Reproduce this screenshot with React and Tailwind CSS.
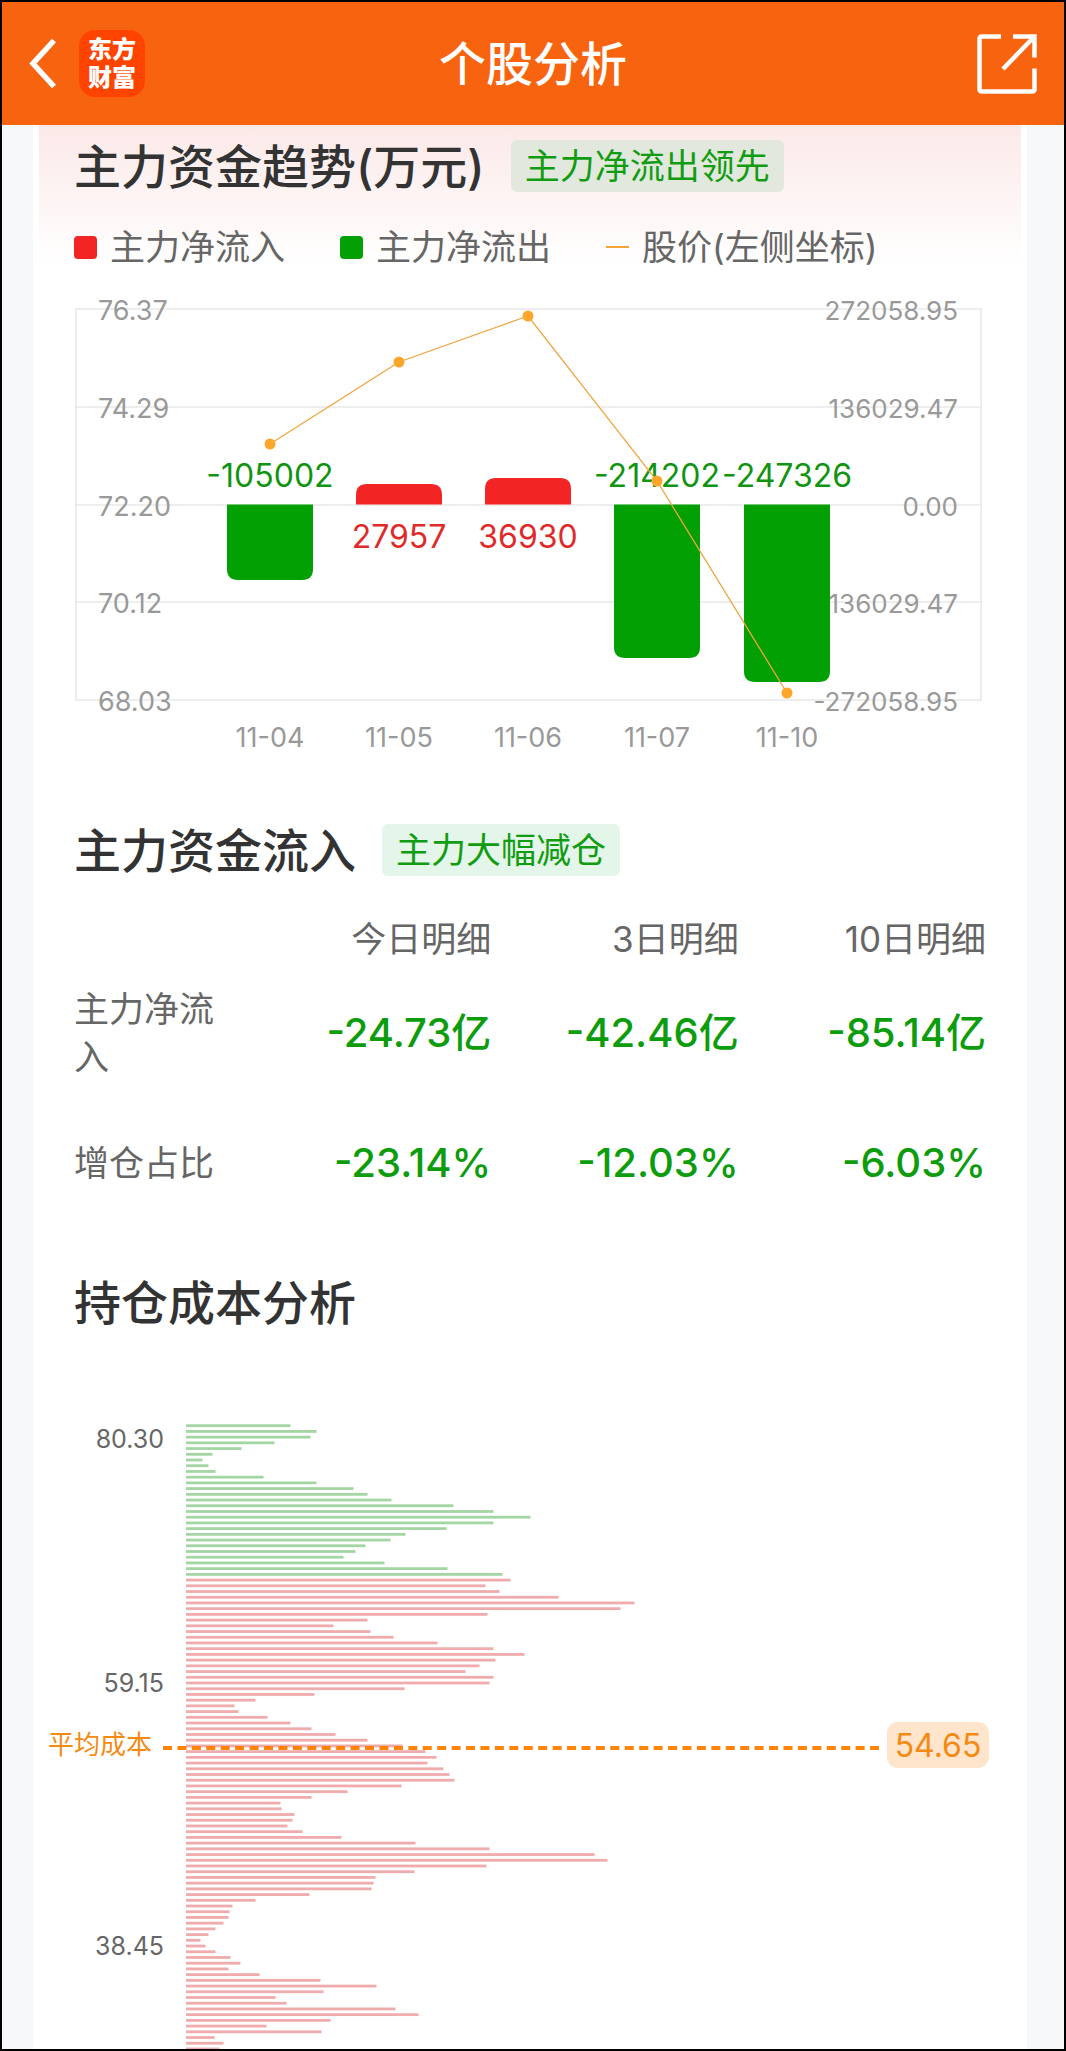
import React from 'react';

const LEGEND = [
  { label: '主力净流入', mark: 'h-[23px] rounded-sm bg-[#f32424]' },
  { label: '主力净流出', mark: 'h-[23px] rounded-sm bg-[#02a002]' },
  { label: '股价(左侧坐标)', mark: 'h-0.5 bg-[#f2a535]' },
];

const GRID = [
  { y: 309, left: '76.37', right: '272058.95' },
  { y: 407, left: '74.29', right: '136029.47' },
  { y: 505, left: '72.20', right: '0.00' },
  { y: 602, left: '70.12', right: '-136029.47' },
  { y: 700, left: '68.03', right: '-272058.95' },
];

const DAYS = [
  { date: '11-04', x: 270, flow: -105002, barEnd: 580, priceY: 444 },
  { date: '11-05', x: 399, flow: 27957, barEnd: 484, priceY: 362 },
  { date: '11-06', x: 528, flow: 36930, barEnd: 478, priceY: 316 },
  { date: '11-07', x: 657, flow: -214202, barEnd: 658, priceY: 481 },
  { date: '11-10', x: 787, flow: -247326, barEnd: 682, priceY: 693 },
];

const FLOW_ROWS = [
  { label: '主力净流入', values: ['-24.73亿', '-42.46亿', '-85.14亿'], height: 'h-[140px]' },
  { label: '增仓占比', values: ['-23.14%', '-12.03%', '-6.03%'], height: 'h-[119px]' },
];

// bar lengths from the highest price down; the first PROFIT_START are above the current price
const PROFIT_START = 27;
const COST_BARS = [
  104, 130, 124, 88, 55, 26, 16, 22, 29, 77, 130, 167, 181, 205, 267, 307, 344, 307, 260, 219,
  204, 179, 169, 157, 198, 261, 316, 324, 299, 313, 372, 448, 434, 301, 181, 147, 184, 207, 251,
  307, 338, 309, 293, 279, 307, 303, 218, 128, 69, 48, 52, 81, 104, 125, 149, 181, 216, 239, 250,
  241, 257, 263, 268, 215, 161, 125, 94, 95, 108, 106, 101, 116, 155, 229, 303, 408, 421, 300,
  228, 189, 187, 185, 123, 69, 46, 43, 42, 37, 29, 22, 14, 19, 29, 44, 54, 42, 73, 134, 190, 137,
  89, 100, 209, 232, 144, 80, 135, 28, 37, 33,
];

const COST_LABELS = [
  { y: 1448, text: '80.30' },
  { y: 1692, text: '59.15' },
  { y: 1955, text: '38.45' },
];

function Header() {
  return (
    <header className="flex h-[123px] items-center justify-between bg-[#f86310] px-[27px] text-white">
      <div className="flex flex-1 items-center gap-[22px]">
        <button type="button" aria-label="返回">
          <svg width="28" height="52" viewBox="0 0 28 52" fill="none" stroke="currentColor" strokeWidth="5.5">
            <path d="M25 2.5 4 25.5 25 48.5" />
          </svg>
        </button>
        <div className="grid h-[67px] w-[66px] place-content-center rounded-2xl bg-[#ff4400] text-center text-2xl leading-7 font-black">
          <span>东方</span>
          <span>财富</span>
        </div>
      </div>
      <h1 className="text-[47px] leading-none font-medium">个股分析</h1>
      <div className="flex flex-1 justify-end">
        <button type="button" aria-label="分享">
          <svg width="60" height="60" viewBox="0 0 60 60" fill="none" stroke="currentColor" strokeWidth="4.5">
            <path d="M24 2.5H4.5a2 2 0 0 0-2 2v51a2 2 0 0 0 2 2h51a2 2 0 0 0 2-2V34.5" />
            <path d="M36 2.5h21.5v21M57 3 26 35" />
          </svg>
        </button>
      </div>
    </header>
  );
}

function SectionTitle({ children, tag, tagClass }) {
  return (
    <div className="flex h-[52px] items-center gap-[26px] px-[35px]">
      <h2 className="text-[47px] leading-none font-medium text-[#333]">{children}</h2>
      {tag && (
        <span className={`flex h-full items-center rounded-md px-[14px] text-[35px] leading-none text-[#119c11] ${tagClass}`}>
          {tag}
        </span>
      )}
    </div>
  );
}

function barPath({ x, flow, barEnd }) {
  const r = flow < 0 ? -11 : 11;
  return `M${x - 43} 504.5V${barEnd + r}Q${x - 43} ${barEnd} ${x - 32} ${barEnd}H${x + 32}Q${x + 43} ${barEnd} ${x + 43} ${barEnd + r}V504.5Z`;
}

function TrendChart() {
  return (
    <svg viewBox="39 271 982 507" className="block w-full" role="img" aria-label="主力资金趋势">
      <g stroke="#e8e8e8" strokeWidth="1.5">
        {GRID.map((g) => (
          <path key={g.y} d={`M75 ${g.y}H982`} />
        ))}
        <path d="M76 309V700M981 309V700" />
      </g>
      <g className="fill-[#999] text-[27px]">
        {GRID.map((g) => (
          <React.Fragment key={g.y}>
            <text x="98" y={g.y + 11}>{g.left}</text>
            <text x="958" y={g.y + 11} textAnchor="end" className="text-[26px]">{g.right}</text>
          </React.Fragment>
        ))}
        {DAYS.map((d) => (
          <text key={d.date} x={d.x} y="747" textAnchor="middle">{d.date}</text>
        ))}
      </g>
      {DAYS.map((d) => (
        <path key={d.date} d={barPath(d)} className={d.flow < 0 ? 'fill-[#02a002]' : 'fill-[#f32424]'} />
      ))}
      {DAYS.map((d) => (
        <text
          key={d.date}
          x={d.x}
          y={d.flow < 0 ? 487 : 548}
          textAnchor="middle"
          className={`text-[32px] ${d.flow < 0 ? 'fill-[#119411]' : 'fill-[#df2a2a]'}`}
        >
          {d.flow}
        </text>
      ))}
      <polyline
        points={DAYS.map((d) => `${d.x},${d.priceY}`).join(' ')}
        fill="none"
        stroke="#f0a540"
        strokeWidth="1.3"
      />
      {DAYS.map((d) => (
        <circle key={d.date} cx={d.x} cy={d.priceY} r="5.5" fill="#fca62c" />
      ))}
    </svg>
  );
}

function FlowTable() {
  return (
    <div className="mt-[39px] px-[35px]">
      <table className="w-full table-fixed text-right">
        <thead>
          <tr className="h-12 text-[35px] leading-[48px] text-[#666]">
            <td className="w-[170px]" />
            <th scope="col" className="font-normal">今日明细</th>
            <th scope="col" className="font-normal">3日明细</th>
            <th scope="col" className="font-normal">10日明细</th>
          </tr>
        </thead>
        <tbody>
          {FLOW_ROWS.map((row) => (
            <tr key={row.label} className={row.height}>
              <th scope="row" className="text-left text-[35px] leading-[48px] font-normal text-[#666]">
                {row.label}
              </th>
              {row.values.map((v) => (
                <td key={v} className="text-[40px] leading-none font-medium text-[#0c9c0c]">{v}</td>
              ))}
            </tr>
          ))}
        </tbody>
      </table>
    </div>
  );
}

function CostChart() {
  return (
    <svg viewBox="39 1328 982 721" className="block w-full" role="img" aria-label="持仓成本分析">
      {COST_BARS.map((len, i) => (
        <rect
          key={i}
          x="186"
          y={1424.3 + i * 5.718}
          width={len + 0.5}
          height="2.8"
          className={i < PROFIT_START ? 'fill-[#a3d6a3]' : 'fill-[#f0acac]'}
        />
      ))}
      <g className="fill-[#666] text-[25px]" textAnchor="end">
        {COST_LABELS.map((l) => (
          <text key={l.text} x="164" y={l.y}>{l.text}</text>
        ))}
      </g>
      <text x="48" y="1754" className="fill-[#f58a12] text-[26px]">平均成本</text>
      <path d="M163 1748H879" stroke="#ff850a" strokeWidth="4" strokeDasharray="9 5.43" />
      <rect x="887" y="1722" width="102" height="46" rx="11" fill="#ffe5cc" />
      <text x="938" y="1757" textAnchor="middle" className="fill-[#f58a12] text-[32px]">54.65</text>
    </svg>
  );
}

export default function App() {
  return (
    <div className="min-h-screen overflow-hidden border-2 border-black bg-[#f7f8fa] font-['Inter','Noto_Sans_CJK_SC',sans-serif]">
      <Header />
      <main className="mr-[37px] ml-[31px] bg-white px-1.5">
        <section className="bg-[linear-gradient(#fbe9e8,#fff_140px)] pt-[15px]">
          <SectionTitle tag="主力净流出领先" tagClass="bg-[#e2e8de]">主力资金趋势(万元)</SectionTitle>
          <ul className="mt-[31px] flex h-12 items-center gap-[55px] px-[35px] text-[35px] leading-none text-[#666]">
            {LEGEND.map((item) => (
              <li key={item.label} className="flex items-center gap-[13px]">
                <span className={`w-[23px] ${item.mark}`} />
                {item.label}
              </li>
            ))}
          </ul>
          <TrendChart />
        </section>
        <section className="mt-[46px]">
          <SectionTitle tag="主力大幅减仓" tagClass="bg-[#e4f5e9]">主力资金流入</SectionTitle>
          <FlowTable />
        </section>
        <section className="mt-[54px]">
          <SectionTitle>持仓成本分析</SectionTitle>
          <CostChart />
        </section>
      </main>
    </div>
  );
}
